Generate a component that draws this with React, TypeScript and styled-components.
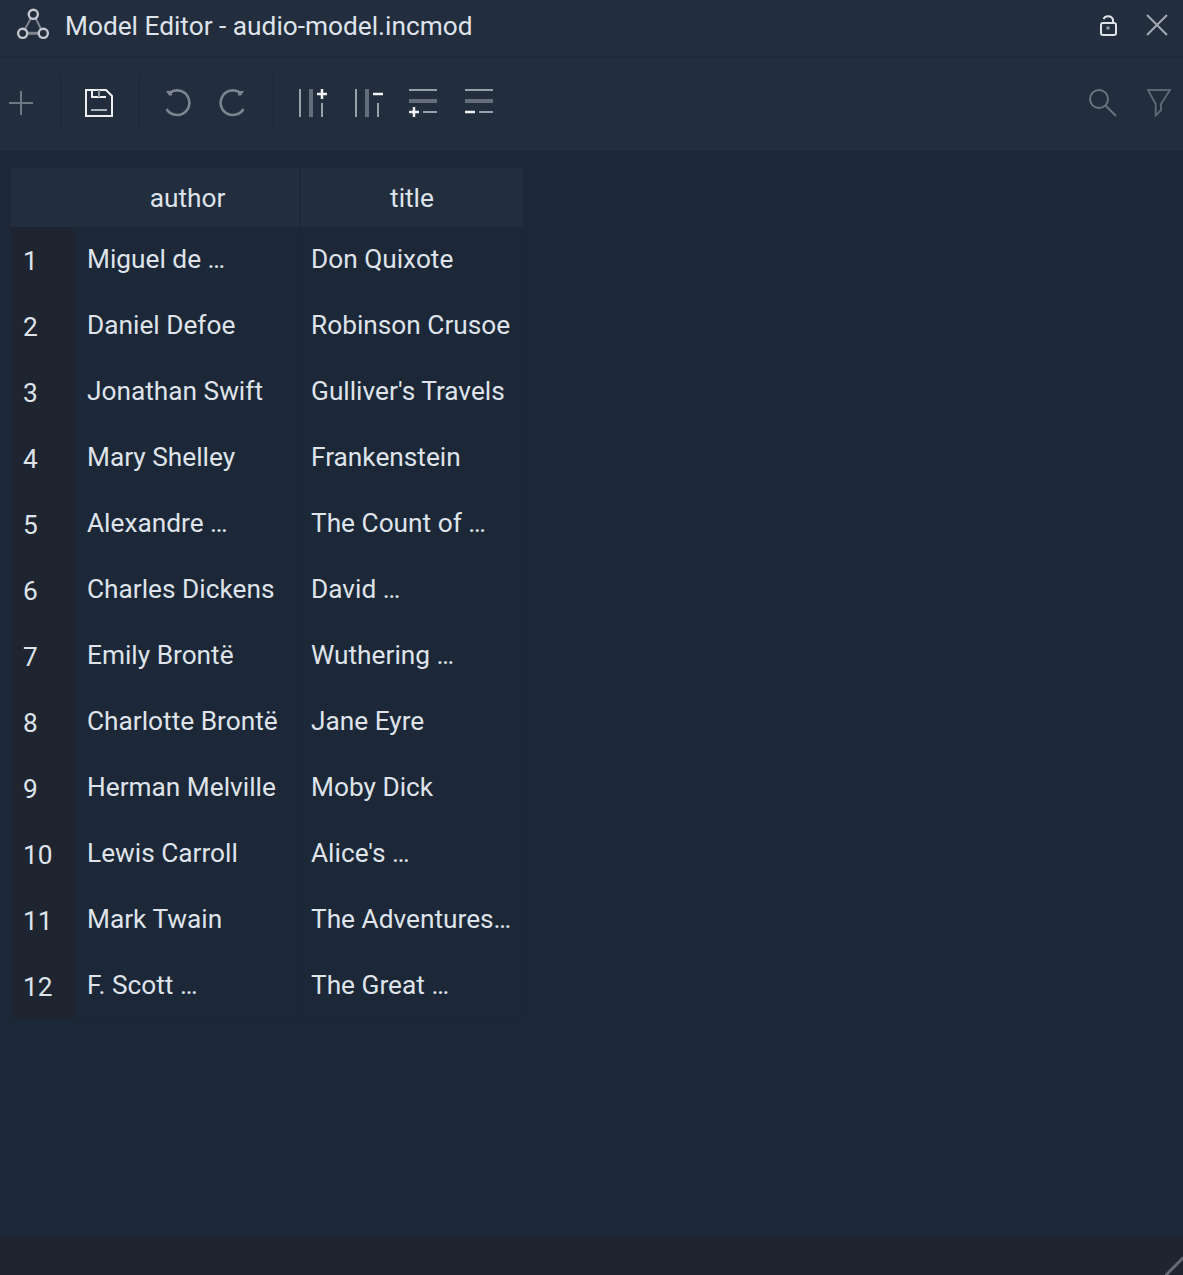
import React from 'react'
import styled, { createGlobalStyle } from 'styled-components'

const books = [
  ['Miguel de …', 'Don Quixote'],
  ['Daniel Defoe', 'Robinson Crusoe'],
  ['Jonathan Swift', "Gulliver's Travels"],
  ['Mary Shelley', 'Frankenstein'],
  ['Alexandre …', 'The Count of …'],
  ['Charles Dickens', 'David …'],
  ['Emily Brontë', 'Wuthering …'],
  ['Charlotte Brontë', 'Jane Eyre'],
  ['Herman Melville', 'Moby Dick'],
  ['Lewis Carroll', "Alice's …"],
  ['Mark Twain', 'The Adventures…'],
  ['F. Scott …', 'The Great …'],
]

const App = () => {
  return (
    <Window>
      <GlobalStyle />
      <TitleBar>
        <AppIcon width="36" height="36" viewBox="0 0 36 36" fill="none">
          <path d="M14.8 10.5 L9 21 M19.8 10.5 L25 21" stroke="#7d858f" strokeWidth="2" />
          <path d="M11.5 25.3 H22.5" stroke="#7d858f" strokeWidth="3" />
          <circle cx="17.3" cy="6.3" r="4.6" stroke="#c4c8ce" strokeWidth="2.4" />
          <circle cx="6.7" cy="25.3" r="4.6" stroke="#c4c8ce" strokeWidth="2.4" />
          <circle cx="27.3" cy="25.3" r="4.6" stroke="#c4c8ce" strokeWidth="2.4" />
        </AppIcon>
        <Title>Model Editor - audio-model.incmod</Title>
        <LockIcon width="22" height="24" viewBox="0 0 22 24" fill="none" stroke="#dfe2e6" strokeWidth="2">
          <rect x="2" y="10" width="15" height="12" rx="2" />
          <path d="M4.5 6 A5 4.5 0 0 1 14 6.5 V10" />
          <rect x="7.5" y="13.5" width="3" height="3" fill="#9aa1ab" stroke="none" />
        </LockIcon>
        <CloseIcon width="24" height="24" viewBox="0 0 24 24" stroke="#a4a9b1" strokeWidth="2">
          <path d="M2 2 L22 22 M22 2 L2 22" />
        </CloseIcon>
      </TitleBar>
      <Toolbar>
        <svg width="24" height="24" viewBox="0 0 24 24" stroke="#6f7883" strokeWidth="2">
          <path d="M12 0 V24 M0 12 H24" />
        </svg>
        <Divider $left={27} $right={23} />
        <svg width="28" height="28" viewBox="0 0 28 28" fill="none" stroke="#eceef0" strokeWidth="2">
          <path d="M1 1 H21 L27 7 V27 H1 Z" />
          <path d="M7 1 V8 H21" />
          <path d="M14 1 V8" stroke="#8d949d" />
          <path d="M6 21 H22" stroke="#a9afb6" />
        </svg>
        <Divider $left={25} $right={23} />
        <HistoryIcon width="28" height="30" viewBox="0 0 28 30" fill="none" stroke="#7c848e" strokeWidth="2.6">
          <path d="M8 4 A12.3 12.3 0 1 1 3.5 21" />
          <path d="M3 3 H9 V7.5 H6 Z" fill="#7c848e" stroke="none" />
        </HistoryIcon>
        <HistoryIcon $gap={28} width="28" height="30" viewBox="0 0 28 30" fill="none" stroke="#7c848e" strokeWidth="2.6">
          <path d="M20 4 A12.3 12.3 0 1 0 24.5 21" />
          <path d="M25 3 H19 V7.5 H22 Z" fill="#7c848e" stroke="none" />
        </HistoryIcon>
        <Divider $left={25} $right={24} />
        <LayoutIcon $gap={26} width="30" height="30" viewBox="0 0 30 30">
          <rect x="1" y="1" width="2" height="28" fill="#98a0a9" />
          <rect x="11" y="1" width="4" height="28" fill="#646d79" />
          <rect x="23" y="15" width="2" height="14" fill="#98a0a9" />
          <path d="M24 1 V11 M19 6 H29" stroke="#f2f3f5" strokeWidth="2.5" />
        </LayoutIcon>
        <LayoutIcon $gap={24} width="30" height="30" viewBox="0 0 30 30">
          <rect x="1" y="1" width="2" height="28" fill="#98a0a9" />
          <rect x="11" y="1" width="4" height="28" fill="#646d79" />
          <rect x="23" y="15" width="2" height="14" fill="#98a0a9" />
          <path d="M19 6 H29" stroke="#f2f3f5" strokeWidth="2.5" />
        </LayoutIcon>
        <LayoutIcon $gap={26} width="30" height="30" viewBox="0 0 30 30">
          <rect x="1" y="1" width="28" height="2" fill="#98a0a9" />
          <rect x="1" y="11" width="28" height="4" fill="#646d79" />
          <rect x="15" y="23" width="14" height="2" fill="#98a0a9" />
          <path d="M6 19 V29 M1 24 H11" stroke="#f2f3f5" strokeWidth="2.5" />
        </LayoutIcon>
        <LayoutIcon $gap={0} width="30" height="30" viewBox="0 0 30 30">
          <rect x="1" y="1" width="28" height="2" fill="#98a0a9" />
          <rect x="1" y="11" width="28" height="4" fill="#646d79" />
          <rect x="15" y="23" width="14" height="2" fill="#98a0a9" />
          <path d="M1 24 H11" stroke="#f2f3f5" strokeWidth="2.5" />
        </LayoutIcon>
        <Spacer />
        <SearchIcon width="28" height="28" viewBox="0 0 28 28" fill="none" stroke="#6b747f" strokeWidth="2">
          <circle cx="10" cy="10" r="9" />
          <path d="M16.5 16.5 L27 27" />
        </SearchIcon>
        <svg width="24" height="28" viewBox="0 0 24 28" fill="none" stroke="#5d6672" strokeWidth="2">
          <path d="M1 1 H23 L14 15 V21 L8.7 26.5 V15 Z" />
        </svg>
      </Toolbar>
      <Content>
        <Table>
          <HeaderRow>
            <HeadCell>author</HeadCell>
            <HeadCell>title</HeadCell>
          </HeaderRow>
          {books.map((b, i) => (
            <Row key={i}>
              <IndexCell>{i + 1}</IndexCell>
              <AuthorCell>{b[0]}</AuthorCell>
              <TitleCell>{b[1]}</TitleCell>
            </Row>
          ))}
        </Table>
      </Content>
      <StatusBar>
        <svg width="18" height="18" viewBox="0 0 18 18" stroke="#626974" strokeWidth="3">
          <path d="M0 19 L19 0" />
        </svg>
      </StatusBar>
    </Window>
  )
}

export default App

const GlobalStyle = createGlobalStyle`
  html, body {
    margin: 0;
    padding: 0;
    background: #1c2737;
  }
  * {
    box-sizing: border-box;
  }
`

const Window = styled.div`
  width: 1183px;
  height: 1275px;
  display: flex;
  flex-direction: column;
  overflow: hidden;
  background: #1c2737;
  color: #dfe3ea;
  font-family: Roboto, "Liberation Sans", sans-serif;
  font-size: 26.25px;
`

const TitleBar = styled.div`
  height: 58px;
  display: flex;
  align-items: center;
  background: #222d3d;
  border-bottom: 2px solid #1f2a39;
  padding: 0 14px 0 16px;
`

const AppIcon = styled.svg`
  margin-top: -4px;
`

const Title = styled.div`
  flex: 1;
  margin-left: 13px;
  margin-top: -4px;
`

const LockIcon = styled.svg`
  margin-right: 24px;
  margin-top: -6px;
`

const CloseIcon = styled.svg`
  margin-top: -6px;
`

const Toolbar = styled.div`
  height: 93px;
  display: flex;
  align-items: center;
  background: #222d3d;
  padding: 0 12px 3px 9px;
`

const Divider = styled.div<{ $left: number; $right: number }>`
  width: 2px;
  height: 56px;
  margin: 0 ${p => p.$right}px 0 ${p => p.$left}px;
  background: #1f2a39;
`

const HistoryIcon = styled.svg<{ $gap?: number }>`
  margin-left: ${p => p.$gap ?? 0}px;
`

const LayoutIcon = styled.svg<{ $gap: number }>`
  margin-right: ${p => p.$gap}px;
`

const Spacer = styled.div`
  flex: 1;
`

const SearchIcon = styled.svg`
  margin-right: 30px;
`

const Content = styled.div`
  flex: 1;
  padding: 17px 0 0 10px;
`

const Table = styled.div`
  width: 513px;
  display: flex;
  flex-direction: column;
`

const HeaderRow = styled.div`
  height: 59px;
  display: grid;
  grid-template-columns: 289px 222px;
  gap: 2px;
  background: #1e2937;
`

const HeadCell = styled.div`
  background: #222d3d;
  display: flex;
  align-items: center;
  justify-content: center;
  &:first-child {
    padding-left: 66px;
  }
`

const Row = styled.div`
  height: 66px;
  display: grid;
  grid-template-columns: 65px 226px 222px;
  border-right: 1px solid #1b2534;
  &:last-child {
    border-bottom: 1px solid #1b2534;
  }
`

const IndexCell = styled.div`
  background: #1e2531;
  margin-left: 1px;
  padding: 19px 0 0 12px;
`

const AuthorCell = styled.div`
  padding: 17px 0 0 12px;
  white-space: nowrap;
  border-right: 1px solid #1b2534;
`

const TitleCell = styled.div`
  padding: 17px 0 0 10px;
  white-space: nowrap;
`

const StatusBar = styled.div`
  height: 39px;
  display: flex;
  justify-content: flex-end;
  align-items: flex-end;
  background: #1e2531;
`
